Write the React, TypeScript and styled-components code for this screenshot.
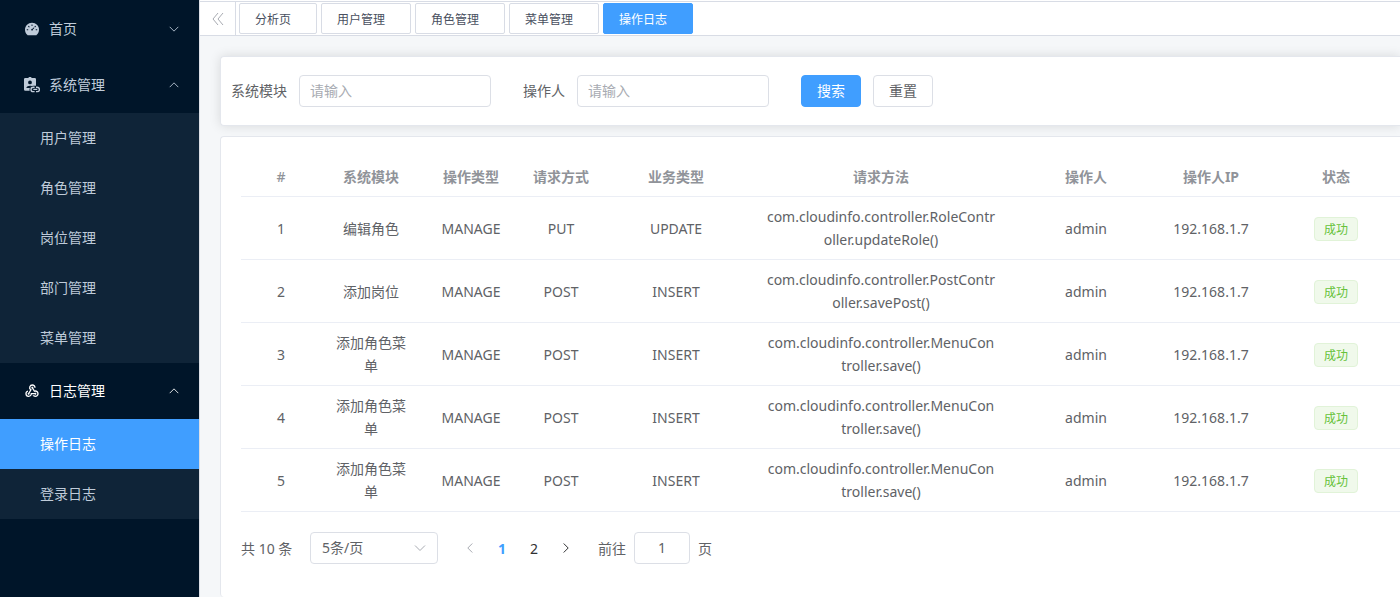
import React from 'react';
import styled, { createGlobalStyle, css } from 'styled-components';
import { AiFillDashboard } from 'react-icons/ai';
import { MdWebhook } from 'react-icons/md';

const GlobalStyle = createGlobalStyle`
  * { box-sizing: border-box; }
  html, body, #root { height: 100%; }
  body {
    margin: 0;
    overflow: hidden;
    background: #f5f7f9;
    color: #606266;
    font: 14px/23px 'Noto Sans', 'Noto Sans CJK SC', sans-serif;
  }
  button, input, select { font: inherit; color: inherit; }
`;

const Layout = styled.div`
  display: flex;
  min-height: 100%;
`;

const Sidebar = styled.nav`
  flex: 0 0 200px;
  padding-top: 1px;
  background: #001529;
  border-right: 1px solid #dcdfe6;
`;

const MenuGroup = styled.button<{ $active?: boolean }>`
  display: flex;
  align-items: center;
  gap: 9px;
  width: 100%;
  height: 56px;
  padding: 0 19px 0 24px;
  border: 0;
  background: transparent;
  color: ${(p) => (p.$active ? '#ffffff' : '#bfcbd9')};
  text-align: left;
  cursor: pointer;
`;

const MenuTitle = styled.span`
  flex: 1;
  padding-bottom: 2px;
`;

const SubMenu = styled.div`
  background: #0f2438;
`;

const MenuLink = styled.a<{ $active?: boolean }>`
  display: flex;
  align-items: center;
  height: 50px;
  padding: 0 0 2px 40px;
  text-decoration: none;
  color: ${(p) => (p.$active ? '#ffffff' : '#bfcbd9')};
  background: ${(p) => (p.$active ? '#409eff' : 'transparent')};
`;

const Main = styled.main`
  flex: 1;
  min-width: 0;
  display: flex;
  flex-direction: column;
  overflow: hidden;
`;

const TabBar = styled.div`
  display: flex;
  height: 36px;
  padding-top: 1px;
  background: #ffffff;
  border-bottom: 1px solid #d8dce5;
`;

const TabBarInner = styled.div`
  display: flex;
  flex: 1;
  border-top: 1px solid #d8dce5;
`;

const CollapseButton = styled.button`
  display: grid;
  place-items: center;
  width: 36px;
  padding: 0;
  border: 0;
  border-right: 1px solid #d8dce5;
  background: transparent;
  color: #a8abb2;
`;

const TabList = styled.div`
  display: flex;
  align-items: flex-start;
  gap: 4px;
  padding: 1px 3px;
`;

const Tab = styled.button<{ $active?: boolean }>`
  height: 31px;
  padding: 2px 25px 0 15px;
  border: 1px solid ${(p) => (p.$active ? '#409eff' : '#d8dce5')};
  border-radius: 2px;
  background: ${(p) => (p.$active ? '#409eff' : '#ffffff')};
  color: ${(p) => (p.$active ? '#ffffff' : '#495060')};
  font-size: 12px;
  line-height: 20px;
  cursor: pointer;
`;

const Content = styled.div`
  flex: 1;
  display: flex;
  flex-direction: column;
  gap: 10px;
  padding: 20px 0 0 20px;
`;

const cardStyle = css`
  background: #ffffff;
  border: 1px solid #e4e7ed;
  border-right: 0;
  border-radius: 4px 0 0 4px;
`;

const SearchCard = styled.form`
  ${cardStyle}
  display: flex;
  gap: 32px;
  padding: 18px 10px;
  box-shadow: 0 0 12px rgba(0, 0, 0, 0.12);
`;

const Field = styled.label`
  display: flex;
  align-items: center;
  gap: 12px;
`;

const FieldName = styled.span`
  padding-bottom: 2px;
`;

const TextInput = styled.input`
  width: 192px;
  height: 32px;
  padding: 0 10px 2px;
  border: 1px solid #dcdfe6;
  border-radius: 4px;
  background: #ffffff;
  &::placeholder { color: #a8abb2; opacity: 1; }
`;

const Actions = styled.div`
  display: flex;
  gap: 12px;
`;

const Button = styled.button<{ $primary?: boolean }>`
  height: 32px;
  padding: 0 15px 2px;
  border: 1px solid ${(p) => (p.$primary ? '#409eff' : '#dcdfe6')};
  border-radius: 4px;
  background: ${(p) => (p.$primary ? '#409eff' : '#ffffff')};
  color: ${(p) => (p.$primary ? '#ffffff' : '#606266')};
  cursor: pointer;
`;

const TableCard = styled.section`
  ${cardStyle}
  border-bottom: 0;
  flex: 1;
  padding: 20px 0 20px 20px;
  overflow: hidden;
`;

const Table = styled.table`
  width: 100%;
  min-width: 1170px;
  table-layout: fixed;
  border-collapse: separate;
  border-spacing: 0;
`;

const HeadCell = styled.th`
  height: 40px;
  padding: 8px 12px;
  border-bottom: 1px solid #ebeef5;
  color: #909399;
  font-weight: 700;
  &:first-child { font-weight: 500; }
`;

const Cell = styled.td<{ $inset?: boolean }>`
  height: 63px;
  padding: 8px ${(p) => (p.$inset ? 15 : 12)}px;
  border-bottom: 1px solid #ebeef5;
  text-align: center;
  word-break: break-all;
`;

const Tag = styled.span`
  display: inline-flex;
  align-items: center;
  height: 24px;
  padding: 2px 9px 0;
  border: 1px solid #e1f3d8;
  border-radius: 4px;
  background: #f0f9eb;
  color: #67c23a;
  font-size: 12px;
  line-height: 20px;
  vertical-align: middle;
`;

const Pagination = styled.div`
  display: flex;
  align-items: center;
  gap: 16px;
  margin-top: 20px;
`;

const Total = styled.span`
  min-width: 53px;
`;

const SelectBox = styled.div`
  display: grid;
  align-items: center;
  width: 128px;
  > * { grid-area: 1 / 1; }
  > svg { justify-self: end; margin-right: 11px; color: #a8abb2; pointer-events: none; }
`;

const Select = styled.select`
  appearance: none;
  width: 100%;
  height: 32px;
  padding: 0 11px 2px;
  border: 1px solid #dcdfe6;
  border-radius: 4px;
  background: #ffffff;
`;

const Pager = styled.div`
  display: flex;
`;

const PageButton = styled.button<{ $active?: boolean }>`
  display: grid;
  place-items: center;
  width: 32px;
  height: 32px;
  padding: 0;
  border: 0;
  background: transparent;
  color: ${(p) => (p.$active ? '#409eff' : '#303133')};
  font-weight: ${(p) => (p.$active ? 700 : 400)};
  &:disabled { color: #a8abb2; }
`;

const Jumper = styled.label`
  display: flex;
  align-items: center;
  gap: 8px;
`;

const JumpInput = styled(TextInput)`
  width: 56px;
  text-align: center;
`;

const chevrons = {
  down: 'M2 4.500l5 5 5-5',
  up: 'M2 9.500l5-5 5 5',
  left: 'M9.300 2.500L4.800 7l4.500 4.500',
  right: 'M4.700 2.500L9.200 7l-4.500 4.500',
};

function Chevron({ direction, size = 14 }: { direction: keyof typeof chevrons; size?: number }) {
  return (
    <svg width={size} height={size} viewBox="0 0 14 14" fill="none" stroke="currentColor" aria-hidden="true">
      <path d={chevrons[direction]} />
    </svg>
  );
}

function BadgeLinkIcon() {
  return (
    <svg width="16" height="16" viewBox="0 0 16 16" fill="none" aria-hidden="true">
      <path
        fill="currentColor"
        fillRule="evenodd"
        d="M1.300 1H4.200a2 2 0 0 1 3.600 0h2.900A1.300 1.300 0 0 1 12 2.300V8.700h-2a4 4 0 0 0-4.300 5.100H1.300A1.300 1.300 0 0 1 0 12.500V2.300A1.300 1.300 0 0 1 1.300 1zM6 3.500a1.900 1.900 0 1 0 0 3.800 1.900 1.900 0 0 0 0-3.800zM2.300 11h3.500a4.200 4.200 0 0 1 1.900-2C5.500 8.200 2.800 9 2.300 11z"
      />
      <path stroke="currentColor" strokeWidth="1.400" d="M10.600 10.200H9.200a2.200 2.200 0 0 0 0 4.400h1.400M12 10.200h1.200a2.200 2.200 0 0 1 0 4.400H12M9.300 12.400h4" />
    </svg>
  );
}

const systemLinks = ['用户管理', '角色管理', '岗位管理', '部门管理', '菜单管理'];
const logLinks = ['操作日志', '登录日志'];
const tabs = ['分析页', '用户管理', '角色管理', '菜单管理', '操作日志'];
const current = '操作日志';

const columns = [
  { title: '#', width: 80 },
  { title: '系统模块', width: 100 },
  { title: '操作类型', width: 100 },
  { title: '请求方式', width: 80 },
  { title: '业务类型', width: 150 },
  { title: '请求方法', width: 260 },
  { title: '操作人', width: 150 },
  { title: '操作人IP', width: 100 },
  { title: '状态', width: 150 },
];

const rows = [
  ['编辑角色', 'PUT', 'UPDATE', 'com.cloudinfo.controller.RoleController.updateRole()'],
  ['添加岗位', 'POST', 'INSERT', 'com.cloudinfo.controller.PostController.savePost()'],
  ['添加角色菜单', 'POST', 'INSERT', 'com.cloudinfo.controller.MenuController.save()'],
  ['添加角色菜单', 'POST', 'INSERT', 'com.cloudinfo.controller.MenuController.save()'],
  ['添加角色菜单', 'POST', 'INSERT', 'com.cloudinfo.controller.MenuController.save()'],
];

export default function App() {
  return (
    <>
      <GlobalStyle />
      <Layout>
        <Sidebar>
          <MenuGroup>
            <AiFillDashboard size={16} />
            <MenuTitle>首页</MenuTitle>
            <Chevron direction="down" size={12} />
          </MenuGroup>
          <MenuGroup>
            <BadgeLinkIcon />
            <MenuTitle>系统管理</MenuTitle>
            <Chevron direction="up" size={12} />
          </MenuGroup>
          <SubMenu>
            {systemLinks.map((name) => (
              <MenuLink key={name} href="#">{name}</MenuLink>
            ))}
          </SubMenu>
          <MenuGroup $active>
            <MdWebhook size={16} />
            <MenuTitle>日志管理</MenuTitle>
            <Chevron direction="up" size={12} />
          </MenuGroup>
          <SubMenu>
            {logLinks.map((name) => (
              <MenuLink key={name} href="#" $active={name === current}>{name}</MenuLink>
            ))}
          </SubMenu>
        </Sidebar>
        <Main>
          <TabBar>
            <TabBarInner>
              <CollapseButton aria-label="收起">
                <svg width="14" height="14" viewBox="0 0 14 14" fill="none" stroke="currentColor" aria-hidden="true">
                  <path d="M7 1L2 7l5 6M12 1L7 7l5 6" />
                </svg>
              </CollapseButton>
              <TabList>
                {tabs.map((name) => (
                  <Tab key={name} $active={name === current}>{name}</Tab>
                ))}
              </TabList>
            </TabBarInner>
          </TabBar>
          <Content>
            <SearchCard onSubmit={(e) => e.preventDefault()}>
              <Field>
                <FieldName>系统模块</FieldName>
                <TextInput placeholder="请输入" />
              </Field>
              <Field>
                <FieldName>操作人</FieldName>
                <TextInput placeholder="请输入" />
              </Field>
              <Actions>
                <Button type="submit" $primary>搜索</Button>
                <Button type="reset">重置</Button>
              </Actions>
            </SearchCard>
            <TableCard>
              <Table>
                <colgroup>
                  {columns.map((c) => <col key={c.title} width={c.width} />)}
                </colgroup>
                <thead>
                  <tr>
                    {columns.map((c) => <HeadCell key={c.title} scope="col">{c.title}</HeadCell>)}
                  </tr>
                </thead>
                <tbody>
                  {rows.map(([module, method, business, handler], i) => (
                    <tr key={i}>
                      <Cell>{i + 1}</Cell>
                      <Cell>{module}</Cell>
                      <Cell>MANAGE</Cell>
                      <Cell>{method}</Cell>
                      <Cell>{business}</Cell>
                      <Cell $inset>{handler}</Cell>
                      <Cell>admin</Cell>
                      <Cell>192.168.1.7</Cell>
                      <Cell><Tag>成功</Tag></Cell>
                    </tr>
                  ))}
                </tbody>
              </Table>
              <Pagination>
                <Total>共 10 条</Total>
                <SelectBox>
                  <Select aria-label="每页条数" defaultValue="5">
                    <option value="5">5条/页</option>
                  </Select>
                  <Chevron direction="down" />
                </SelectBox>
                <Pager>
                  <PageButton disabled aria-label="上一页"><Chevron direction="left" /></PageButton>
                  <PageButton $active>1</PageButton>
                  <PageButton>2</PageButton>
                  <PageButton aria-label="下一页"><Chevron direction="right" /></PageButton>
                </Pager>
                <Jumper>
                  前往
                  <JumpInput defaultValue="1" />
                  页
                </Jumper>
              </Pagination>
            </TableCard>
          </Content>
        </Main>
      </Layout>
    </>
  );
}
